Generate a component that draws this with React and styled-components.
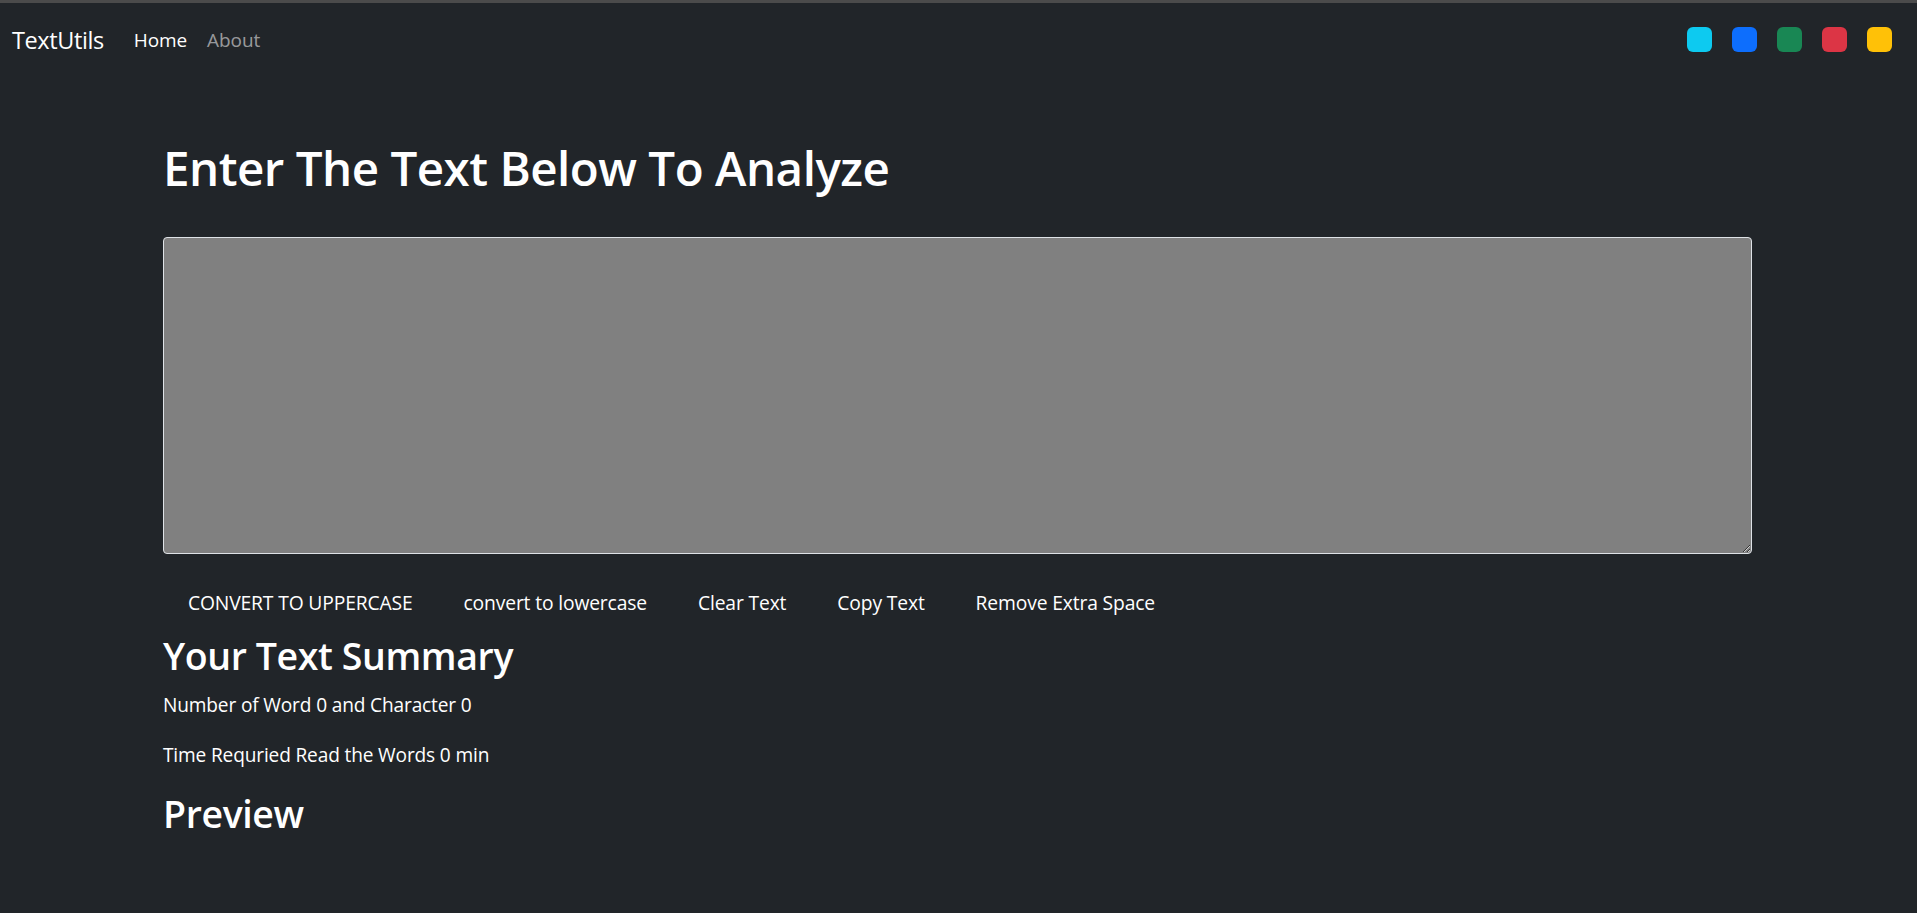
import React, { useState } from "react";
import styled, { createGlobalStyle } from "styled-components";

const GlobalStyle = createGlobalStyle`
  html, body {
    margin: 0;
    padding: 0;
    background: #212529;
    color: #fff;
    font-family: "Open Sans", "Noto Sans", sans-serif;
  }
  * {
    box-sizing: border-box;
  }
`;

const TopEdge = styled.div`
  height: 3px;
  background: #4b4b4b;
`;

const Navbar = styled.nav`
  display: flex;
  align-items: center;
  height: 70px;
  padding: 0 25px 0 12px;
  background: #212529;
`;

const Brand = styled.a`
  font-size: 23.5px;
  color: #fff;
  margin-right: 20px;
  padding-top: 4px;
  text-decoration: none;
  letter-spacing: -0.4px;
`;

const NavLink = styled.a`
  font-size: 19px;
  padding: 14px 10px 10px;
  text-decoration: none;
  letter-spacing: -0.1px;
  color: ${(p) => (p.active ? "#fff" : "rgba(255,255,255,0.55)")};
`;

const Swatches = styled.div`
  display: flex;
  gap: 20px;
  margin-left: auto;
  margin-top: 3px;
`;

const Swatch = styled.button`
  width: 25px;
  height: 25px;
  border: none;
  padding: 0;
  border-radius: 6px;
  background: ${(p) => p.color};
  cursor: pointer;
`;

const Main = styled.main`
  padding: 0 165px 0 163px;
`;

const Title = styled.h1`
  margin: 65px 0 0;
  font-size: 47.5px;
  font-weight: 600;
  line-height: 60px;
  letter-spacing: -0.5px;
`;

const TextBox = styled.textarea`
  display: block;
  width: 100%;
  height: 317px;
  margin-top: 39px;
  background: #808080;
  color: #fff;
  border: 1px solid #dee2e6;
  border-radius: 4px;
  padding: 8px 15px;
  font: inherit;
  font-size: 20px;
  resize: vertical;
  outline: none;
`;

const ButtonRow = styled.div`
  display: flex;
  gap: 27px;
  padding-left: 13px;
  margin-top: 27px;
`;

const ActionButton = styled.button`
  background: transparent;
  border: none;
  color: #fff;
  font-family: inherit;
  font-size: 19.3px;
  line-height: 28px;
  padding: 8px 12px;
  cursor: pointer;
  letter-spacing: -0.15px;
`;

const SubHeading = styled.h2`
  margin: 7px 0 10px;
  font-size: 37.5px;
  font-weight: 600;
  line-height: 48px;
  letter-spacing: -0.4px;
`;

const Para = styled.p`
  margin: 0 0 20px;
  font-size: 19.1px;
  line-height: 30px;
  letter-spacing: -0.15px;
`;

const colors = ["#0dcaf0", "#0d6efd", "#198754", "#dc3545", "#ffc107"];

export default function App() {
  const [text, setText] = useState("");
  const words = text.split(/\s+/).filter((w) => w.length).length;

  return (
    <>
      <GlobalStyle />
      <TopEdge />
      <Navbar>
        <Brand href="#">TextUtils</Brand>
        <NavLink active href="#">Home</NavLink>
        <NavLink href="#">About</NavLink>
        <Swatches>
          {colors.map((c) => (
            <Swatch key={c} color={c} aria-label={c} />
          ))}
        </Swatches>
      </Navbar>
      <Main>
        <Title>Enter The Text Below To Analyze</Title>
        <TextBox value={text} onChange={(e) => setText(e.target.value)} />
        <ButtonRow>
          <ActionButton onClick={() => setText(text.toUpperCase())}>CONVERT TO UPPERCASE</ActionButton>
          <ActionButton onClick={() => setText(text.toLowerCase())}>convert to lowercase</ActionButton>
          <ActionButton onClick={() => setText("")}>Clear Text</ActionButton>
          <ActionButton>Copy Text</ActionButton>
          <ActionButton onClick={() => setText(text.split(/\s+/).join(" "))}>Remove Extra Space</ActionButton>
        </ButtonRow>
        <SubHeading>Your Text Summary</SubHeading>
        <Para>Number of Word {words} and Character {text.length}</Para>
        <Para>Time Requried Read the Words {0.008 * words} min</Para>
        <SubHeading>Preview</SubHeading>
        <Para>{text}</Para>
      </Main>
    </>
  );
}
